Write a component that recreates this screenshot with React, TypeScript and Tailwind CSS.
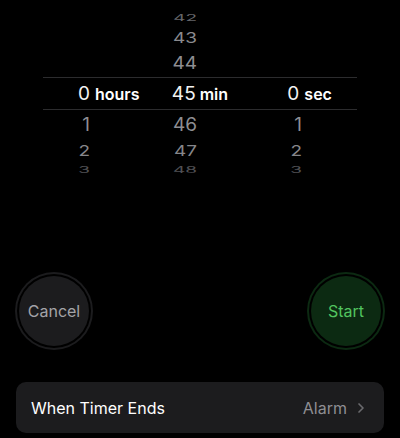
import { ChevronRight } from 'lucide-react';

// one wheel row: height, vertical squash and tint for each column's number
type WheelRow = {
  h: number;
  hours?: string;
  min: string;
  sec?: string;
  squash: string;
  tint: string;
};

const upper: WheelRow[] = [
  { h: 18, min: '42', squash: 'scale-y-[0.5]', tint: 'text-[#66666a]' },
  { h: 22, min: '43', squash: 'scale-y-[0.78]', tint: 'text-[#8a8a8e]' },
  { h: 29, min: '44', squash: 'scale-y-[0.93]', tint: 'text-[#8e8e92]' },
];

const lower: WheelRow[] = [
  { h: 29, hours: '1', min: '46', sec: '1', squash: 'scale-y-[0.95]', tint: 'text-[#8e8e92]' },
  { h: 23, hours: '2', min: '47', sec: '2', squash: 'scale-y-[0.78]', tint: 'text-[#86868a]' },
  { h: 16, hours: '3', min: '48', sec: '3', squash: 'scale-y-[0.45]', tint: 'text-[#505054]' },
];

const Row = ({ row }: { row: WheelRow }) => (
  <div className={`flex items-center pl-[40px] text-[19px] ${row.tint}`} style={{ height: row.h }}>
    <div className="w-[107px] flex">
      <span className={`w-[50px] text-right ${row.squash}`}>{row.hours}</span>
    </div>
    <div className="w-[107px] flex">
      <span className={`w-[50px] text-right ${row.squash}`}>{row.min}</span>
    </div>
    <div className="w-[107px] flex">
      <span className={`w-[48px] text-right ${row.squash}`}>{row.sec}</span>
    </div>
  </div>
);

const Picker = () => (
  <div className="pt-[8px] h-[190px] overflow-hidden leading-none">
    {upper.map((r) => (
      <Row key={r.min} row={r} />
    ))}
    {/* selected row between the two hairlines */}
    <div className="mx-[43px] h-[33px] border-y border-[#2c2c2e] flex items-center">
      <div className="w-[104px] flex items-baseline">
        <span className="w-[47px] text-right text-[19px] text-[#f2f2f2]">0</span>
        <span className="ml-[5px] text-[16px] font-semibold text-white">hours</span>
      </div>
      <div className="w-[107px] flex items-baseline">
        <span className="w-[50px] text-right text-[19px] text-[#f2f2f2]">45</span>
        <span className="ml-[4px] text-[16px] font-semibold text-white">min</span>
      </div>
      <div className="w-[107px] flex items-baseline">
        <span className="w-[48px] text-right text-[19px] text-[#f2f2f2]">0</span>
        <span className="ml-[5px] text-[16px] font-semibold text-white">sec</span>
      </div>
    </div>
    {lower.map((r) => (
      <Row key={r.min} row={r} />
    ))}
  </div>
);

const RoundButton = ({ label, fill, text }: { label: string; fill: string; text: string }) => (
  <div className={`w-[78px] h-[78px] rounded-full p-[2px] ${fill}`}>
    <div className="w-full h-full rounded-full p-[2px] bg-black">
      <div className={`w-full h-full rounded-full flex items-center justify-center text-[16px] ${fill} ${text}`}>
        {label}
      </div>
    </div>
  </div>
);

export default function App() {
  return (
    <div
      className="w-[400px] h-[438px] bg-black flex flex-col overflow-hidden"
      style={{ fontFamily: 'Inter, "Noto Sans", sans-serif' }}
    >
      <Picker />

      <div className="flex justify-between px-[15px] mt-[82px]">
        <RoundButton label="Cancel" fill="bg-[#1c1c1e]" text="text-[#a4a4a8]" />
        <RoundButton label="Start" fill="bg-[#0c2a12]" text="text-[#52c45f]" />
      </div>

      <div className="mx-[16px] mt-[32px] h-[51px] rounded-[10px] bg-[#1c1c1e] flex items-center px-[15px]">
        <span className="text-[16px] text-white">When Timer Ends</span>
        <span className="ml-auto text-[16px] text-[#8e8e93]">Alarm</span>
        <ChevronRight className="ml-[6px] w-[16px] h-[16px] text-[#6a6a6e]" strokeWidth={2.5} />
      </div>
    </div>
  );
}
